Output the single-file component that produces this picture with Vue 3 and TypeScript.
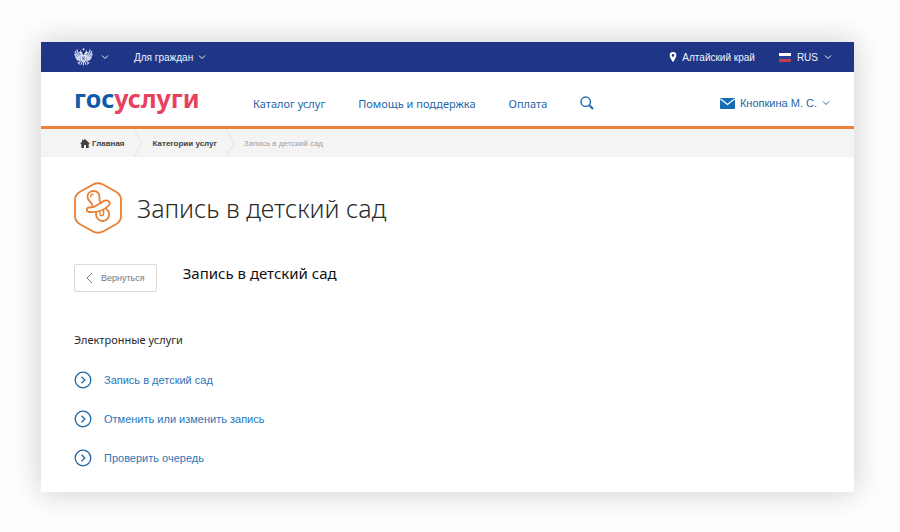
<script setup lang="ts">
interface LinkItem {
  label: string
  href: string
}

const nav: LinkItem[] = [
  { label: 'Каталог услуг', href: '#catalog' },
  { label: 'Помощь и поддержка', href: '#help' },
  { label: 'Оплата', href: '#payment' },
]

const services: LinkItem[] = [
  { label: 'Запись в детский сад', href: '#enroll' },
  { label: 'Отменить или изменить запись', href: '#change' },
  { label: 'Проверить очередь', href: '#queue' },
]
</script>

<template>
  <div class="page">
    <div class="topbar">
      <button class="top-button emblem-button" type="button" aria-label="Портал">
        <svg class="emblem" viewBox="0 0 36 34" aria-hidden="true">
          <path d="M18 0l2 2-1 2h-2l-1-2zM12 4l2 1v2h-3zM24 4l-2 1v2h3z" fill="#dfe5f5" />
          <path d="M17 13c-1-3-2-6-5-6-2 0-4 2-3 3l2 0c1 1 2 3 2 5M19 13c1-3 2-6 5-6 2 0 4 2 3 3l-2 0c-1 1-2 3-2 5" fill="#dfe5f5" />
          <path d="M13 15C8 14 7 8 5 3M12 17C6 16 4 11 2 6M12 19C6 19 3 15 1 11M12 21c-5 1-8-2-9-5M12 23c-3 1-5 0-7-2M23 15c5-1 6-7 8-12M24 17c6-1 8-6 10-11M24 19c6 0 9-4 11-8M24 21c5 1 8-2 9-5M24 23c3 1 5 0 7-2" fill="none" stroke="#cdd6ee" stroke-width="2.500" />
          <path d="M12 13h12v8c0 3-3 5-6 7-3-2-6-4-6-7z" fill="#dfe5f5" />
          <path d="M15 16h6v4c0 2-1 3-3 4-2-1-3-2-3-4z" fill="#8794c4" />
          <path d="M13 24l-4 5M23 24l4 5M18 26v7M15 27l-2 5M21 27l2 5M7 27l4 4M29 27l-4 4" fill="none" stroke="#cdd6ee" stroke-width="2" />
        </svg>
        <svg class="chevron" viewBox="0 0 8 6" aria-hidden="true"><path d="M1 1.5l3 3 3-3" /></svg>
      </button>
      <button class="top-button audience" type="button">
        Для граждан
        <svg class="chevron" viewBox="0 0 8 6" aria-hidden="true"><path d="M1 1.5l3 3 3-3" /></svg>
      </button>
      <button class="top-button region" type="button">
        <svg class="pin" viewBox="0 0 8 10" aria-hidden="true">
          <path fill-rule="evenodd" d="M4 0a3.3 3.3 0 0 0-3.3 3.4C.7 5.700 4 10 4 10s3.300-4.300 3.300-6.600A3.300 3.300 0 0 0 4 0zm0 2.100a1.300 1.300 0 1 1 0 2.600 1.300 1.300 0 0 1 0-2.600z" fill="#fff" />
        </svg>
        Алтайский край
      </button>
      <button class="top-button language" type="button">
        <svg class="flag" viewBox="0 0 12 9" aria-hidden="true">
          <path d="M0 0h12v3H0z" fill="#fff" />
          <path d="M0 3h12v3H0z" fill="#24459c" />
          <path d="M0 6h12v3H0z" fill="#c43c50" />
        </svg>
        RUS
        <svg class="chevron" viewBox="0 0 8 6" aria-hidden="true"><path d="M1 1.5l3 3 3-3" /></svg>
      </button>
    </div>

    <header class="header">
      <a class="logo" href="#home"><span class="logo-blue">гос</span><span class="logo-red">услуг<span lang="bg">и</span></span></a>
      <nav class="nav">
        <a v-for="item in nav" :key="item.href" :href="item.href">{{ item.label }}</a>
        <button class="search" type="button" aria-label="Поиск">
          <svg viewBox="0 0 14 14" aria-hidden="true">
            <circle cx="5.700" cy="5.700" r="4.700" />
            <path d="M9 9l4 4" stroke-width="2" />
          </svg>
        </button>
      </nav>
      <button class="user" type="button">
        <svg class="mail" viewBox="0 0 15 11" aria-hidden="true">
          <rect width="15" height="11" rx="1" fill="#176cb3" />
          <path d="M0.500 1l7 5.500 7-5.500" fill="none" stroke="#fff" stroke-width="1.300" />
        </svg>
        Кнопкина М. С.
        <svg class="chevron" viewBox="0 0 8 6" aria-hidden="true"><path d="M1 1.5l3 3 3-3" /></svg>
      </button>
    </header>

    <nav class="crumbs" aria-label="Навигация">
      <a class="crumb home" href="#home">
        <svg class="house" viewBox="0 0 10 9" aria-hidden="true">
          <path d="M5 0l5 4.700H8.700V9H6V6H4v3H1.300V4.700H0L2 2.800V.7h1.300v.9z" fill="#414141" />
        </svg>
        Главная
      </a>
      <svg class="divider" viewBox="0 0 10 28" aria-hidden="true"><path d="M1 0l8 14-8 14" /></svg>
      <a class="crumb categories" href="#categories">Категории услуг</a>
      <svg class="divider" viewBox="0 0 10 28" aria-hidden="true"><path d="M1 0l8 14-8 14" /></svg>
      <span class="crumb current">Запись в детский сад</span>
    </nav>

    <main class="content">
      <div class="title">
        <svg class="badge" viewBox="0 0 48 52" aria-hidden="true">
          <path d="M19 2.500Q24 0 29 2.500L42 9.700Q47 12.500 47 18V34Q47 39.500 42 42.300L29 49.500Q24 52 19 49.500L6 42.300Q1 39.500 1 34V18Q1 12.500 6 9.700Z" />
          <path d="M18.500 24.500C19 20.500 13.500 19.500 13.500 14.800C13.500 11.200 16 9 19.500 9C23.200 9 25.700 11.500 25.500 15.200C25.400 17.800 25 19.500 27 21.300" />
          <path d="M16.700 14.800c0-1.500 1-2.700 2.500-2.700" stroke-width="1.300" />
          <path d="M15.500 30C12 29.800 11.800 25.600 15.200 25.500C24 25.500 26 19 31.500 18.500C35.500 18.200 37 21 34.700 23.500C30 28.500 23 30.500 15.500 30Z" />
          <path d="M22.300 30.500a6.600 6.600 0 1 0 10-3.600" />
          <path d="M26 30v2a1.800 1.800 0 0 0 3.600 0V28.300" stroke-width="1.400" />
        </svg>
        <h1>Запись в детский сад</h1>
      </div>

      <div class="subtitle">
        <button class="back" type="button">
          <svg viewBox="0 0 7 12" aria-hidden="true"><path d="M6 1L1 6l5 5" /></svg>
          Вернуться
        </button>
        <h2>Запись в детский сад</h2>
      </div>

      <h3>Электронные услуги</h3>
      <ul class="services">
        <li v-for="service in services" :key="service.href">
          <a :href="service.href">
            <svg viewBox="0 0 18 18" aria-hidden="true">
              <circle cx="9" cy="9" r="7.800" />
              <path d="M7.500 5.800L10.800 9l-3.300 3.200" />
            </svg>
            <span>{{ service.label }}</span>
          </a>
        </li>
      </ul>
    </main>
  </div>
</template>

<style>
body {
  background: #fefefe;
}
</style>

<style scoped>
.page {
  margin: 42px 46px 41px 41px;
  background: #fff;
  box-shadow: 0 0 28px 2px rgba(0, 0, 0, 0.18);
  font-family: "Liberation Sans", sans-serif;
}

a {
  color: inherit;
  text-decoration: none;
}

button {
  display: flex;
  align-items: center;
  padding: 0;
  border: 0;
  background: none;
  color: inherit;
  font: inherit;
  white-space: nowrap;
  cursor: pointer;
}

svg {
  flex: none;
}

.chevron {
  width: 8px;
  height: 6px;
  fill: none;
  stroke: currentColor;
  stroke-width: 1;
}

.topbar {
  display: flex;
  align-items: center;
  height: 30px;
  padding: 0 22px 0 33px;
  background: #1f3687;
  color: #f1f4fc;
  font-size: 10px;
}

.emblem-button {
  gap: 8px;
}

.emblem {
  width: 19px;
  height: 18px;
}

.audience {
  gap: 5px;
  margin-left: 25px;
}

.region {
  gap: 5px;
  margin-left: auto;
}

.pin {
  width: 8px;
  height: 10px;
}

.language {
  gap: 6px;
  margin-left: 24px;
}

.flag {
  width: 12px;
  height: 9px;
}

.header {
  display: flex;
  align-items: center;
  height: 54px;
  padding: 0 24px 0 33px;
  border-bottom: 3px solid #ee8138;
  color: #1d66a8;
}

.logo {
  width: 179px;
  padding-bottom: 2px;
  font-family: "Noto Sans", sans-serif;
  font-size: 25px;
  font-weight: 700;
  line-height: 36px;
}

.logo-blue {
  color: #0d5ca7;
}

.logo-red {
  color: #e8415f;
}

.nav {
  display: flex;
  align-items: center;
  gap: 33px;
  padding-top: 8px;
  font-family: "Noto Sans", sans-serif;
  font-size: 11px;
  white-space: nowrap;
}

.search svg {
  width: 14px;
  height: 14px;
  fill: none;
  stroke: #1d66a8;
  stroke-width: 1.4;
}

.user {
  gap: 5px;
  margin-left: auto;
  padding-top: 8px;
  font-size: 11px;
}

.mail {
  width: 15px;
  height: 11px;
}

.crumbs {
  display: flex;
  align-items: center;
  height: 28px;
  padding-left: 39px;
  background: #f4f4f4;
  color: #414141;
  font-size: 8px;
  font-weight: 700;
}

.home {
  display: flex;
  align-items: center;
  gap: 2px;
  margin-right: 8px;
}

.house {
  width: 10px;
  height: 9px;
}

.divider {
  width: 10px;
  height: 28px;
  fill: none;
  stroke: #e2e2e2;
}

.categories {
  margin: 0 8px 0 10px;
}

.current {
  margin-left: 9px;
  color: #a0a0a0;
  font-weight: 400;
}

.content {
  padding: 25px 33px;
}

.title {
  display: flex;
  align-items: center;
  gap: 15px;
}

.badge {
  width: 48px;
  height: 52px;
  fill: none;
  stroke: #e77f32;
  stroke-width: 1.8;
  stroke-linecap: round;
  stroke-linejoin: round;
}

h1,
h2,
h3 {
  margin: 0;
  color: #2b2b2b;
  font-family: "Noto Sans", sans-serif;
}

h1 {
  font-size: 25px;
  font-weight: 300;
  line-height: 34px;
}

.subtitle {
  display: flex;
  align-items: flex-start;
  gap: 26px;
  margin-top: 30px;
}

.back {
  gap: 8px;
  height: 28px;
  padding: 0 11px;
  border: 1px solid #d9d9d9;
  border-radius: 2px;
  color: #777;
  font-size: 9px;
}

.back svg {
  width: 7px;
  height: 12px;
  fill: none;
  stroke: #777;
}

h2 {
  color: #111;
  font-size: 15px;
  font-weight: 400;
  line-height: 18px;
}

h3 {
  margin-top: 38px;
  font-size: 11px;
  font-weight: 400;
  line-height: 20px;
}

.services {
  display: flex;
  flex-direction: column;
  gap: 21px;
  margin: 21px 0 0;
  padding: 0;
  list-style: none;
}

.services a {
  display: flex;
  align-items: center;
  gap: 12px;
  color: #2a76b8;
  font-size: 11px;
  line-height: 16px;
}

.services svg {
  width: 18px;
  height: 18px;
  fill: none;
  stroke: #1f66a6;
  stroke-width: 1.3;
}
</style>
